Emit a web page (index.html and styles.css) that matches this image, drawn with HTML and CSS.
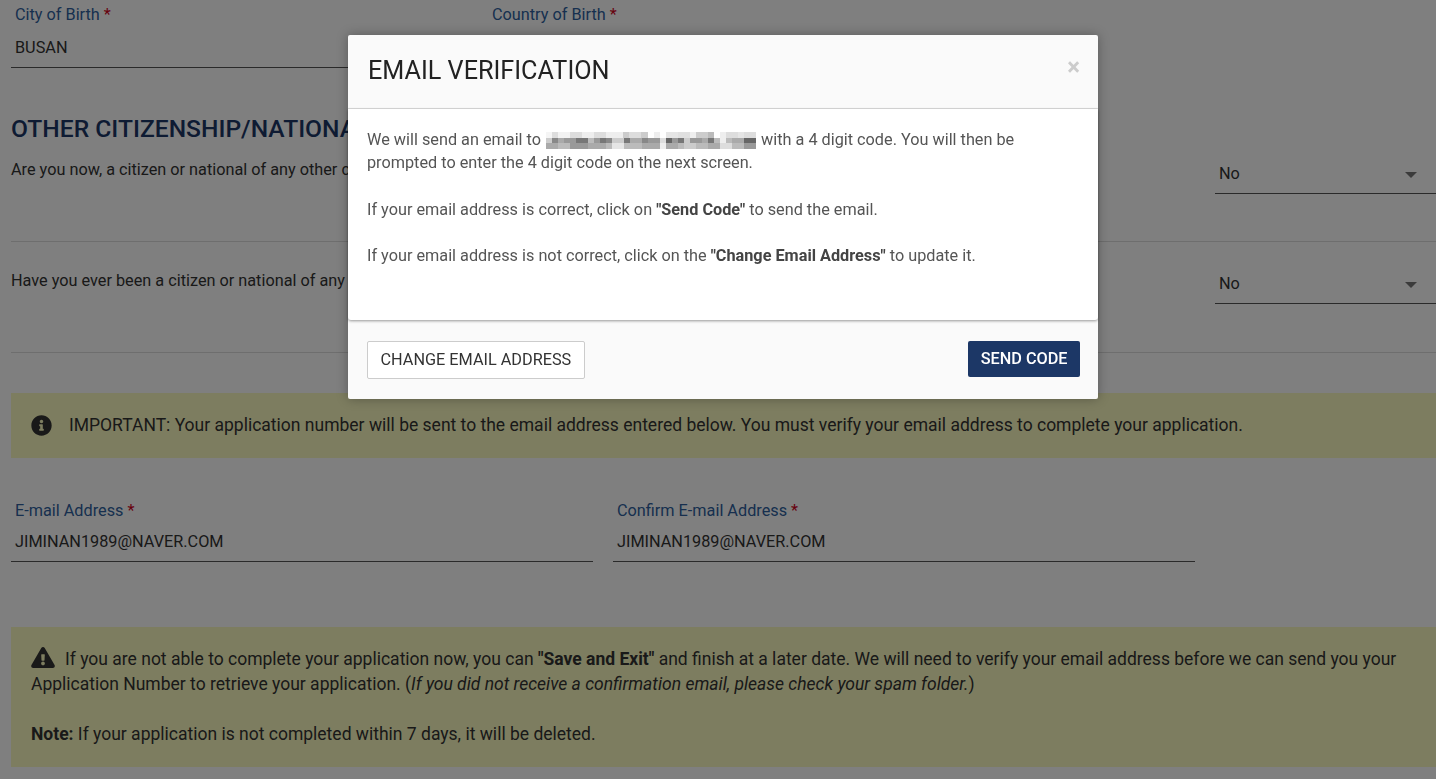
FILE: index.html
```html
<!DOCTYPE html>
<html lang="en">
<head>
    <meta charset="UTF-8" />
    <title>Application</title>
    <link rel="stylesheet" href="styles.css">
</head>
<body>

<div class="page">
    <div class="row row-birth">
        <div class="field field-city">
            <label>City of Birth <span class="req">*</span></label>
            <div class="value">BUSAN</div>
        </div>
        <div class="field field-country">
            <label>Country of Birth <span class="req">*</span></label>
            <div class="value">&nbsp;</div>
        </div>
    </div>

    <h2 class="section-title">OTHER CITIZENSHIP/NATIONALITY</h2>

    <div class="question question-first">
        <p>Are you now, a citizen or national of any other country?</p>
        <div class="select">No<span class="caret"></span></div>
    </div>
    <div class="question question-second">
        <p>Have you ever been a citizen or national of any other country?</p>
        <div class="select">No<span class="caret"></span></div>
    </div>

    <div class="alert alert-info">
        <svg class="icon-info" viewBox="0 0 512 512"><path d="M256 8C119 8 8 119 8 256s111 248 248 248 248-111 248-248S393 8 256 8zm0 110c23 0 42 19 42 42s-19 42-42 42-42-19-42-42 19-42 42-42zm56 254c0 7-5 12-12 12h-88c-7 0-12-5-12-12v-24c0-7 5-12 12-12h12v-64h-12c-7 0-12-5-12-12v-24c0-7 5-12 12-12h64c7 0 12 5 12 12v100h12c7 0 12 5 12 12v24z"/></svg>
        <span class="alert-text">IMPORTANT: Your application number will be sent to the email address entered below. You must verify your email address to complete your application.</span>
    </div>

    <div class="row row-email">
        <div class="field field-half">
            <label>E-mail Address <span class="req">*</span></label>
            <div class="value">JIMINAN1989@NAVER.COM</div>
        </div>
        <div class="field field-half">
            <label>Confirm E-mail Address <span class="req">*</span></label>
            <div class="value">JIMINAN1989@NAVER.COM</div>
        </div>
    </div>

    <div class="alert alert-warning">
        <p><svg class="icon-warning" viewBox="0 0 576 512"><path d="M570 440c18 32-5 72-42 72H48c-37 0-60-40-42-72L246 24c18-32 66-32 84 0l240 416zM288 354c-25 0-46 21-46 46s21 46 46 46 46-21 46-46-21-46-46-46zm-44-166l7 136c0 6 6 11 12 11h50c6 0 12-5 12-11l7-136c0-7-5-12-12-12h-64c-7 0-12 5-12 12z"/></svg>If you are not able to complete your application now, you can <b>"Save and Exit"</b> and finish at a later date. We will need to verify your email address before we can send you your Application Number to retrieve your application. (<i>If you did not receive a confirmation email, please check your spam folder.</i>)</p>
        <p class="note"><b>Note:</b> If your application is not completed within 7 days, it will be deleted.</p>
    </div>
</div>

<div class="backdrop"></div>

<div class="modal">
    <div class="modal-header">
        <h3>EMAIL VERIFICATION</h3>
        <span class="close">&times;</span>
    </div>
    <div class="modal-body">
        <p>We will send an email to <span class="blurred"></span> with a 4 digit code. You will then be prompted to enter the 4 digit code on the next screen.</p>
        <p>If your email address is correct, click on <b>"Send Code"</b> to send the email.</p>
        <p>If your email address is not correct, click on the <b>"Change Email Address"</b> to update it.</p>
    </div>
    <div class="modal-footer">
        <button class="btn btn-default">CHANGE EMAIL ADDRESS</button>
        <button class="btn btn-primary">SEND CODE</button>
    </div>
</div>

</body>
</html>
```

FILE: styles.css
```css
* {
  margin: 0;
  padding: 0;
  box-sizing: border-box;
  font-family: 'Roboto', sans-serif;
}

html, body {
  height: 779px;
  overflow: hidden;
}

body {
  background: #fff;
  color: #333;
  font-size: 16.25px;
}

.page {
  padding-left: 11px;
}

.row {
  display: flex;
}

.row-birth {
  gap: 20px;
}

.field label {
  display: block;
  padding-left: 4px;
  color: #2e5f9e;
  line-height: 20px;
}

.req {
  color: #d0021b;
}

.value {
  height: 41px;
  padding: 11px 4px 0;
  border-bottom: 1px solid #555;
  line-height: 20px;
}

.field-city {
  width: 457px;
  padding-top: 5px;
}

.field-city .value {
  height: 43px;
  padding-top: 13px;
}

.field-country {
  width: 461px;
  padding-top: 5px;
}

.section-title {
  margin-top: 46px;
  color: #1c3766;
  font-size: 24.6px;
  font-weight: 500;
  line-height: 30px;
}

.question {
  display: flex;
  justify-content: space-between;
  border-bottom: 1px solid #ddd;
}

.question p {
  line-height: 20px;
}

.question-first {
  height: 98px;
  padding-top: 16px;
}

.question-second {
  height: 111px;
  padding-top: 29px;
}

.select {
  position: relative;
  width: 221px;
  height: 36px;
  margin-top: -3px;
  padding: 6px 4px 0;
  border-bottom: 1px solid #555;
  line-height: 20px;
}

.question-first .select {
  margin-top: -2px;
}

.caret {
  position: absolute;
  top: 14px;
  right: 19px;
  border-left: 6px solid transparent;
  border-right: 6px solid transparent;
  border-top: 6px solid #777;
}

.alert {
  background: #fbfbc0;
  font-size: 17.5px;
}

.alert-info {
  display: flex;
  align-items: center;
  height: 65px;
  margin-top: 40px;
  padding-left: 20px;
}

.alert-text {
  margin-top: -2px;
}

.icon-info {
  width: 21px;
  height: 21px;
  margin-right: 17px;
  fill: #333;
  flex-shrink: 0;
}

.row-email {
  gap: 20px;
  margin-top: 43px;
}

.field-half {
  width: 582px;
}

.alert-warning {
  height: 140px;
  margin-top: 65px;
  padding: 20px 20px 0;
  line-height: 25px;
}

.icon-warning {
  width: 24px;
  height: 21px;
  margin-right: 10px;
  fill: #333;
  vertical-align: -3px;
}

.note {
  margin-top: 25px;
}

.backdrop {
  position: fixed;
  top: 0;
  left: 0;
  width: 100%;
  height: 100%;
  background: rgba(0, 0, 0, 0.5);
}

.modal {
  position: absolute;
  top: 35px;
  left: 348px;
  width: 750px;
  height: 364px;
  background: #fafafa;
  border-radius: 2px;
  display: flex;
  flex-direction: column;
  box-shadow: 0 0 12px rgba(0, 0, 0, 0.3);
}

.modal-header {
  display: flex;
  justify-content: space-between;
  height: 74px;
  padding: 20px 18px 0 20px;
  border-bottom: 1px solid #ddd;
}

.modal-header h3 {
  margin-top: 1px;
  color: #222;
  font-size: 25.2px;
  font-weight: 400;
  line-height: 30px;
}

.close {
  color: #ccc;
  font-size: 24px;
  font-weight: 700;
  line-height: 24px;
}

.modal-body {
  height: 211px;
  padding: 19px 20px 0 19px;
  background: #fff;
  border-radius: 0 0 3px 3px;
  color: #555;
  line-height: 23.25px;
  box-shadow: 0 1px 3px rgba(0, 0, 0, 0.4);
}

.modal-body p {
  margin-bottom: 23px;
}

.modal-body b {
  color: #444;
}

/* address pixelated out in the original, three rows of 6px cells */
.blurred {
  display: inline-block;
  width: 210px;
  height: 17px;
  margin: 0 1px;
  vertical-align: -4px;
  background:
    linear-gradient(90deg, #f5f5f5 0 6px, #ddd 6px 12px, #f2f2f2 12px 24px, #ddd 24px 36px, #eee 36px 48px, #ddd 48px 60px, #eee 60px 77px, #ccc 77px 83px, #ddd 83px 95px, #ccc 95px 102px, #fff 102px 108px, #eee 108px 114px, #fff 114px 120px, #e5e5e5 120px 132px, #e0e0e0 132px 144px, #eee 144px 150px, #ccc 150px 162px, #bbb 162px 168px, #fff 168px 174px, #eee 174px 180px, #ddd 180px 192px, #e5e5e5 192px 198px, #ddd 198px 210px) 0 0 / 210px 6px no-repeat,
    linear-gradient(90deg, #ccc 0 6px, #888 6px 12px, #aaa 12px 18px, #999 18px 30px, #777 30px 42px, #bbb 42px 48px, #999 48px 54px, #777 54px 60px, #888 60px 66px, #ccc 66px 78px, #777 78px 84px, #aaa 84px 96px, #888 96px 102px, #999 102px 114px, #ddd 114px 120px, #666 120px 126px, #999 126px 132px, #777 132px 138px, #ccc 138px 144px, #999 144px 156px, #aaa 156px 162px, #777 162px 168px, #bbb 168px 174px, #eee 174px 180px, #bbb 180px 186px, #aaa 186px 198px, #666 198px 210px) 0 6px / 210px 5px no-repeat,
    linear-gradient(90deg, #aaa 0 12px, #bbb 12px 24px, #999 24px 42px, #aaa 42px 60px, #bbb 60px 66px, #e5e5e5 66px 78px, #bbb 78px 96px, #aaa 96px 114px, #eee 114px 120px, #aaa 120px 132px, #bbb 132px 138px, #ccc 138px 150px, #bbb 150px 162px, #aaa 162px 174px, #ddd 174px 186px, #bbb 186px 198px, #999 198px 210px) 0 11px / 210px 6px no-repeat;
}

.modal-footer {
  display: flex;
  justify-content: space-between;
  align-items: flex-start;
  padding: 21px 18px 0 19px;
}

.btn {
  height: 38px;
  padding: 0 12.5px 2px;
  border-radius: 2px;
  font-size: 16.25px;
}

.btn-default {
  background: #fff;
  border: 1px solid #ccc;
  color: #333;
}

.btn-primary {
  height: 36px;
  padding: 0 12.5px 2px;
  background: #1c3766;
  border: none;
  color: #fff;
  font-weight: 500;
}
```
